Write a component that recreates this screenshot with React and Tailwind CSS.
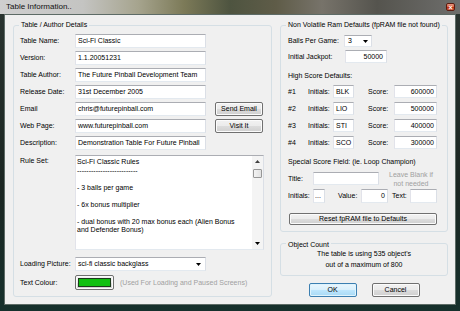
import React from "react";

const field =
  "bg-white border border-[#abadb3] border-b-[#e3e9ef] border-l-[#e2e3ea] border-r-[#dbdfe6] flex items-center overflow-hidden whitespace-nowrap";

const btn =
  "rounded-[2px] border border-[#707070] bg-[linear-gradient(to_bottom,#f2f2f2_0%,#ebebeb_50%,#dddddd_50%,#cfcfcf_100%)] shadow-[inset_0_0_0_1px_#fbfbfb] flex items-center justify-center whitespace-nowrap";

function Arrow() {
  return (
    <svg width="5" height="3" viewBox="0 0 5 3" className="shrink-0">
      <path d="M0 0H5L2.5 3Z" fill="#000" />
    </svg>
  );
}

function Group({ label, className, children }) {
  return (
    <div className={`relative border border-[#d5dfe5] rounded-[3px] ${className}`}>
      <div className="absolute left-[5px] top-[-5px] px-[2px] bg-[#f0f0f0] whitespace-nowrap">{label}</div>
      {children}
    </div>
  );
}

function LRow({ label, children, className = "" }) {
  return (
    <div className={`flex items-center h-[14px] ${className}`}>
      <div className="w-[55px] shrink-0 whitespace-nowrap">{label}</div>
      {children}
    </div>
  );
}

export default function App() {
  return (
    <div className="w-[460px] h-[311px] flex flex-col overflow-hidden bg-[linear-gradient(to_bottom,#2a3430_0%,#1b2622_60%,#16302c_100%)] font-['Liberation_Sans',Arial,sans-serif] text-[7px] leading-[8px] text-black">
      {/* title bar */}
      <div className="h-[14px] shrink-0 flex items-center bg-[linear-gradient(to_right,#cfcfcf_0%,#c4c4c2_18%,#a6a48e_30%,#7c7a58_40%,#4e5440_50%,#5f5c48_60%,#77736a_70%,#55544e_82%,#6e6e6c_100%)]">
        <span className="ml-[6px] text-[8px] leading-[10px] text-[#101010]">Table Information..</span>
        <div className="ml-auto mr-[5px] w-[9px] h-[8px] rounded-[2px] border border-[#5b1c10] bg-[linear-gradient(to_bottom,#e99a84_0%,#d25a3c_50%,#b52a10_51%,#d5603a_100%)] flex items-center justify-center text-white text-[7px] leading-[7px] font-bold">
          ×
        </div>
      </div>

      <div className="flex-1 flex px-[4px] pb-[6px]">
        <div className="flex-1 bg-[#f0f0f0] border border-[#5d6b66] flex pl-[8px] pt-[10px]">
          {/* left group */}
          <Group label="Table / Author Details" className="w-[259px] h-[272px] shrink-0 pl-[6px] pt-[8px]">
            <div className="flex flex-col gap-[3px]">
              <LRow label="Table Name:">
                <div className={`${field} w-[131px] h-[14px] pl-[2px]`}>Sci-Fi Classic</div>
              </LRow>
              <LRow label="Version:">
                <div className={`${field} w-[131px] h-[14px] pl-[2px]`}>1.1.20051231</div>
              </LRow>
              <LRow label="Table Author:">
                <div className={`${field} w-[131px] h-[14px] pl-[2px]`}>The Future Pinball Development Team</div>
              </LRow>
              <LRow label="Release Date:">
                <div className={`${field} w-[131px] h-[14px] pl-[2px]`}>31st December 2005</div>
              </LRow>
              <LRow label="Email">
                <div className={`${field} w-[131px] h-[14px] pl-[2px]`}>chris@futurepinball.com</div>
                <div className={`${btn} w-[48px] h-[14px] ml-[9px]`}>Send Email</div>
              </LRow>
              <LRow label="Web Page:">
                <div className={`${field} w-[131px] h-[14px] pl-[2px]`}>www.futurepinball.com</div>
                <div className={`${btn} w-[48px] h-[14px] ml-[9px]`}>Visit It</div>
              </LRow>
              <LRow label="Description:">
                <div className={`${field} w-[131px] h-[14px] pl-[2px]`}>Demonstration Table For Future Pinball</div>
              </LRow>
            </div>

            <div className="flex mt-[5px]">
              <div className="w-[55px] shrink-0 pt-[2px]">Rule Set:</div>
              <div className="w-[189px] h-[95px] bg-white border border-[#abadb3] border-b-[#e3e9ef] border-l-[#e2e3ea] border-r-[#dbdfe6] flex">
                <div className="flex-1 pl-[1px] pt-[2px] leading-[8.5px] whitespace-nowrap overflow-hidden">
                  <div>Sci-Fi Classic Rules</div>
                  <div>--------------------------</div>
                  <div>&nbsp;</div>
                  <div>- 3 balls per game</div>
                  <div>&nbsp;</div>
                  <div>- 6x bonus multiplier</div>
                  <div>&nbsp;</div>
                  <div>- dual bonus with 20 max bonus each (Alien Bonus</div>
                  <div>and Defender Bonus)</div>
                </div>
                <div className="w-[11px] shrink-0 bg-[#f4f4f4] flex flex-col items-center">
                  <div className="h-[11px] flex items-center justify-center">
                    <svg width="5" height="3" viewBox="0 0 5 3"><path d="M0 3H5L2.5 0Z" fill="#404040" /></svg>
                  </div>
                  <div className="w-[9px] h-[9px] mt-[2px] rounded-[1px] border border-[#979797] bg-[linear-gradient(to_right,#f3f3f3,#e2e2e2)]" />
                  <div className="flex-1" />
                  <div className="h-[11px] flex items-center justify-center">
                    <Arrow />
                  </div>
                </div>
              </div>
            </div>

            <LRow label="Loading Picture:" className="mt-[7px]">
              <div className={`${field} w-[131px] h-[14px] pl-[2px] pr-[4px] justify-between`}>
                <span>sci-fi classic backglass</span>
                <Arrow />
              </div>
            </LRow>

            <div className="flex items-center h-[15px] mt-[4px]">
              <div className="w-[55px] shrink-0">Text Colour:</div>
              <div className={`${btn} w-[39px] h-[15px]`}>
                <div className="w-[33px] h-[9px] bg-[#10c010] border border-[#1c3a1c]" />
              </div>
              <div className="ml-[6px] text-[#a0a0a0] whitespace-nowrap">(Used For Loading and Paused Screens)</div>
            </div>
          </Group>

          {/* right column */}
          <div className="w-[168px] shrink-0 ml-[8px] flex flex-col">
            <Group label="Non Volatile Ram Defaults (fpRAM file not found)" className="h-[207px] pl-[7px] pt-[9px] flex flex-col">
              <div className="flex items-center h-[12px]">
                <div className="w-[56px] shrink-0">Balls Per Game:</div>
                <div className={`${field} w-[28px] h-[12px] pl-[3px] pr-[3px] justify-between`}>
                  <span>3</span>
                  <Arrow />
                </div>
              </div>
              <div className="flex items-center h-[13px] mt-[3px]">
                <div className="w-[57px] shrink-0">Initial Jackpot:</div>
                <div className={`${field} w-[42px] h-[13px] justify-end pr-[3px]`}>50000</div>
              </div>
              <div className="h-[8px] mt-[9px]">High Score Defaults:</div>
              <div className="flex flex-col gap-[4px] mt-[5px]">
                {[
                  ["#1", "BLK", "600000"],
                  ["#2", "LIO", "500000"],
                  ["#3", "STI", "400000"],
                  ["#4", "SCO", "300000"],
                ].map(([n, i, s]) => (
                  <div key={n} className="flex items-center h-[13px]">
                    <div className="w-[20px] shrink-0">{n}</div>
                    <div className="w-[25px] shrink-0">Initials:</div>
                    <div className={`${field} w-[21px] h-[13px] pl-[2px]`}>{i}</div>
                    <div className="w-[26px] shrink-0 ml-[14px]">Score:</div>
                    <div className={`${field} w-[43px] h-[13px] justify-end pr-[2px]`}>{s}</div>
                  </div>
                ))}
              </div>
              <div className="h-[8px] mt-[9px]">Special Score Field: (ie. Loop Champion)</div>
              <div className="flex items-center h-[13px] mt-[6px]">
                <div className="w-[25px] shrink-0">Title:</div>
                <div className={`${field} w-[66px] h-[13px]`} />
                <div className="w-[52px] ml-[6px] text-center text-[#a0a0a0] leading-[9px]">
                  Leave Blank if
                  <br />
                  not needed
                </div>
              </div>
              <div className="flex items-center h-[14px] mt-[4px]">
                <div className="w-[25px] shrink-0">Initials:</div>
                <div className={`${field} w-[12px] h-[14px] pl-[1px]`}>...</div>
                <div className="w-[23px] shrink-0 ml-[13px]">Value:</div>
                <div className={`${field} w-[27px] h-[14px] justify-end pr-[2px]`}>0</div>
                <div className="w-[18px] shrink-0 ml-[4px]">Text:</div>
                <div className={`${field} w-[27px] h-[14px]`} />
              </div>
              <div className={`${btn} w-[148px] h-[12px] mt-[10px] ml-[1px]`}>Reset fpRAM file to Defaults</div>
            </Group>

            <Group label="Object Count" className="h-[33px] mt-[11px] pt-[4px] text-center leading-[11px]">
              <div>The table is using 535 object's</div>
              <div>out of a maximum of 800</div>
            </Group>

            <div className="flex justify-center mt-[7px]">
              <div className="w-[48px] h-[14px] rounded-[2px] border border-[#3c7fb1] bg-[linear-gradient(to_bottom,#eaf6fd_0%,#d9f0fc_50%,#bee6fd_50%,#a7d9f5_100%)] shadow-[inset_0_0_0_1px_#dff3fc] flex items-center justify-center">
                OK
              </div>
              <div className={`${btn} w-[48px] h-[14px] ml-[15px]`}>Cancel</div>
            </div>
          </div>
        </div>
      </div>
    </div>
  );
}
